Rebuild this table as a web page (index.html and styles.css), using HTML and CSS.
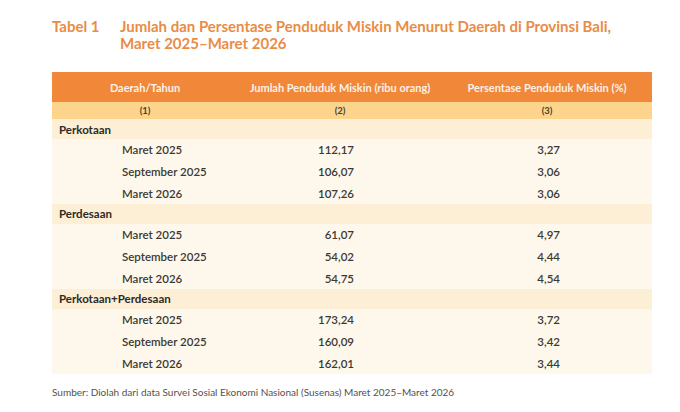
FILE: index.html
```html
<!DOCTYPE html>
<html lang="id">
<head>
<meta charset="utf-8">
<title>Tabel 1</title>
<link rel="stylesheet" href="styles.css">
</head>
<body>
<div class="page">
  <div class="title">
    <span class="title-num">Tabel 1</span>
    <span class="title-text">Jumlah dan Persentase Penduduk Miskin Menurut Daerah di Provinsi Bali,<br>Maret 2025–Maret 2026</span>
  </div>
  <table class="data">
    <colgroup>
      <col class="c1"><col class="c2"><col class="c3">
    </colgroup>
    <thead>
      <tr class="head">
        <th>Daerah/Tahun</th>
        <th>Jumlah Penduduk Miskin (ribu orang)</th>
        <th>Persentase Penduduk Miskin (%)</th>
      </tr>
      <tr class="sub">
        <th>(1)</th><th>(2)</th><th>(3)</th>
      </tr>
    </thead>
    <tbody>
      <tr class="group"><td colspan="3">Perkotaan</td></tr>
      <tr class="row"><td class="lbl">Maret 2025</td><td class="n2">112,17</td><td class="n3">3,27</td></tr>
      <tr class="row"><td class="lbl">September 2025</td><td class="n2">106,07</td><td class="n3">3,06</td></tr>
      <tr class="row"><td class="lbl">Maret 2026</td><td class="n2">107,26</td><td class="n3">3,06</td></tr>
      <tr class="group"><td colspan="3">Perdesaan</td></tr>
      <tr class="row"><td class="lbl">Maret 2025</td><td class="n2">61,07</td><td class="n3">4,97</td></tr>
      <tr class="row"><td class="lbl">September 2025</td><td class="n2">54,02</td><td class="n3">4,44</td></tr>
      <tr class="row"><td class="lbl">Maret 2026</td><td class="n2">54,75</td><td class="n3">4,54</td></tr>
      <tr class="group"><td colspan="3">Perkotaan+Perdesaan</td></tr>
      <tr class="row"><td class="lbl">Maret 2025</td><td class="n2">173,24</td><td class="n3">3,72</td></tr>
      <tr class="row"><td class="lbl">September 2025</td><td class="n2">160,09</td><td class="n3">3,42</td></tr>
      <tr class="row"><td class="lbl">Maret 2026</td><td class="n2">162,01</td><td class="n3">3,44</td></tr>
    </tbody>
  </table>
  <p class="source">Sumber: Diolah dari data Survei Sosial Ekonomi Nasional (Susenas) Maret 2025–Maret 2026</p>
</div>
</body>
</html>
```

FILE: styles.css
```css
html, body {
  margin: 0;
  padding: 0;
  background: #ffffff;
}

.page {
  padding: 18px 0 0 52px;
  font-family: Lato, "Open Sans", sans-serif;
}

.title {
  display: flex;
  font-weight: 700;
  font-size: 15px;
  line-height: 17px;
  color: #e98c45;
}

.title-num {
  flex: 0 0 68px;
}

.data {
  margin-top: 20px;
  width: 600px;
  border-collapse: collapse;
  table-layout: fixed;
  font-size: 11.5px;
  color: #3c3834;
}

.c1 { width: 186px; }
.c2 { width: 204px; }
.c3 { width: 210px; }

.data th,
.data td {
  padding: 0;
}

.head th {
  height: 30px;
  background: #f08739;
  color: #fdf1e6;
  font-weight: 700;
  font-size: 11px;
  text-align: center;
}

.sub th {
  height: 17px;
  background: #fcd48c;
  color: #4a4036;
  font-weight: 700;
  font-size: 9.5px;
  text-align: center;
}

.group td {
  height: 20px;
  background: #fdefd6;
  font-weight: 700;
  padding-left: 7px;
  color: #2e2a26;
}

.row td {
  height: 21.67px;
  background: #fef8ec;
  font-weight: 600;
}

.row .lbl {
  padding-left: 70px;
}

.row .n2 {
  text-align: right;
  padding-right: 88px;
}

.row .n3 {
  text-align: right;
  padding-right: 92px;
}

.source {
  margin: 12px 0 0 0;
  font-size: 10px;
  line-height: 12px;
  color: #55504b;
}
```
